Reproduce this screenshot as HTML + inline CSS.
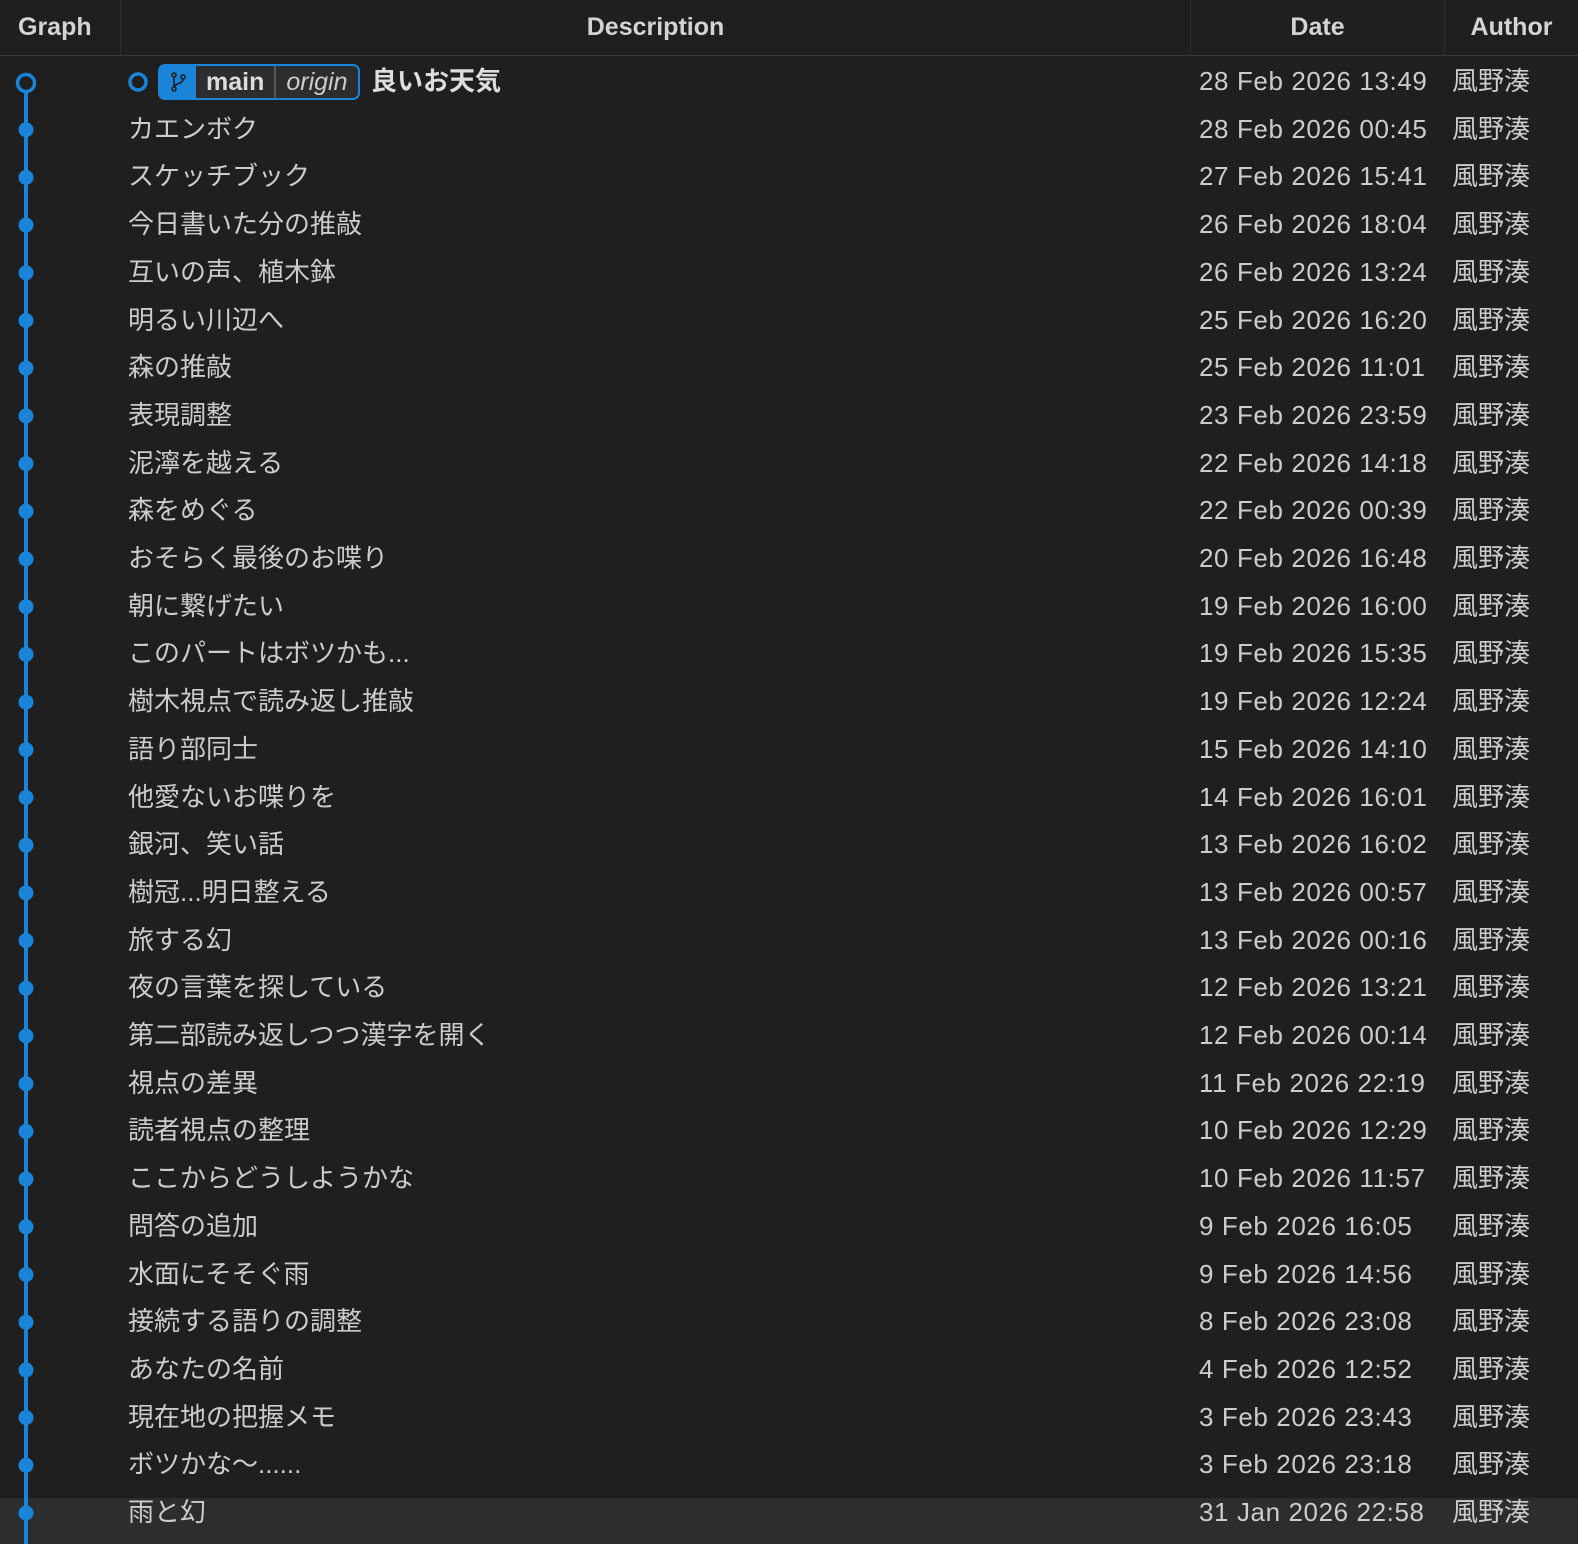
<!DOCTYPE html>
<html style="margin:0;width:1578px;height:1544px;overflow:hidden"><head><meta charset="utf-8"><style>
body{margin:0;width:1578px;height:1544px;background:#1f1f1f;overflow:hidden;font-family:"Liberation Sans","Noto Sans CJK JP",sans-serif;color:#cccccc}
#wrap{position:relative;width:1578px;height:1544px;overflow:hidden}
.hdr{position:absolute;top:0;left:0;width:1578px;height:56px;border-bottom:1px solid #3a3a3a;font-weight:bold;font-size:25px;color:#d4d4d4;box-sizing:border-box}
.hdr div{position:absolute;top:0;height:56px;line-height:54px;border-right:1px solid #2f2f2f;text-align:center;box-sizing:border-box}
.row{position:absolute;left:0;width:1578px;height:47.7px;font-size:26px;line-height:47.7px}
.row .d{position:absolute;left:128px;white-space:nowrap}
.row .t{position:absolute;left:1199px;letter-spacing:0.6px;white-space:nowrap}
.row .a{position:absolute;left:1452px;white-space:nowrap}
.badge{position:absolute;left:158px;top:6px;height:36px;border:2px solid #1a84d8;border-radius:7px;background:#2b2d2e;display:flex;box-sizing:border-box;line-height:32px;font-size:25px}
.badge .ic{width:36px;background:#1a84d8;display:flex;align-items:center;justify-content:center}
.badge .m{padding:0 10px;font-weight:bold;color:#ddd;border-right:2px solid #555}
.badge .o{padding:0 10px;font-style:italic;color:#ccc}
</style></head><body><div id="wrap">
<div class="hdr">
<div style="left:0;width:121px;text-align:left;padding-left:18px">Graph</div>
<div style="left:121px;width:1070px">Description</div>
<div style="left:1191px;width:254px">Date</div>
<div style="left:1445px;width:133px;border:none">Author</div>
</div>
<div style="position:absolute;left:0;top:1498px;width:1578px;height:46px;background:#2b2d2e"></div>
<svg style="position:absolute;left:0;top:0" width="60" height="1544">
<line x1="26" y1="93" x2="26" y2="1544" stroke="#1a84d8" stroke-width="4"/>
<circle cx="26" cy="83" r="8.5" fill="#1f1f1f" stroke="#1a84d8" stroke-width="3.5"/>
<g fill="#1a84d8" id="dots"></g>
</svg>
<svg style="position:absolute;left:126px;top:70px" width="24" height="24"><circle cx="12" cy="12" r="8" fill="none" stroke="#1a84d8" stroke-width="3.5"/></svg>
<div id="rows"></div>
</div>
<script>
const data=[["良いお天気","28 Feb 2026 13:49"],["カエンボク","28 Feb 2026 00:45"],["スケッチブック","27 Feb 2026 15:41"],["今日書いた分の推敲","26 Feb 2026 18:04"],["互いの声、植木鉢","26 Feb 2026 13:24"],["明るい川辺へ","25 Feb 2026 16:20"],["森の推敲","25 Feb 2026 11:01"],["表現調整","23 Feb 2026 23:59"],["泥濘を越える","22 Feb 2026 14:18"],["森をめぐる","22 Feb 2026 00:39"],["おそらく最後のお喋り","20 Feb 2026 16:48"],["朝に繋げたい","19 Feb 2026 16:00"],["このパートはボツかも...","19 Feb 2026 15:35"],["樹木視点で読み返し推敲","19 Feb 2026 12:24"],["語り部同士","15 Feb 2026 14:10"],["他愛ないお喋りを","14 Feb 2026 16:01"],["銀河、笑い話","13 Feb 2026 16:02"],["樹冠...明日整える","13 Feb 2026 00:57"],["旅する幻","13 Feb 2026 00:16"],["夜の言葉を探している","12 Feb 2026 13:21"],["第二部読み返しつつ漢字を開く","12 Feb 2026 00:14"],["視点の差異","11 Feb 2026 22:19"],["読者視点の整理","10 Feb 2026 12:29"],["ここからどうしようかな","10 Feb 2026 11:57"],["問答の追加","9 Feb 2026 16:05"],["水面にそそぐ雨","9 Feb 2026 14:56"],["接続する語りの調整","8 Feb 2026 23:08"],["あなたの名前","4 Feb 2026 12:52"],["現在地の把握メモ","3 Feb 2026 23:43"],["ボツかな〜......","3 Feb 2026 23:18"],["雨と幻","31 Jan 2026 22:58"]];
let h="",dots="";
data.forEach((r,i)=>{const top=58+i*47.7;const cy=top+24;
if(i==0){h+=`<div class="row" style="top:${top}px"><div class="badge"><div class="ic"><svg width="20" height="22" viewBox="0 0 20 22"><g fill="none" stroke="#1f1f1f" stroke-width="1.6"><circle cx="6" cy="4" r="2"/><circle cx="6" cy="18" r="2"/><circle cx="15" cy="6" r="2"/><line x1="6" y1="6" x2="6" y2="16"/><path d="M15 8 C15 13 7 12 6.5 16"/></g></svg></div><div class="m">main</div><div class="o">origin</div></div><div class="d" style="left:371px;font-weight:bold;color:#ddd">${r[0]}</div><div class="t">${r[1]}</div><div class="a">風野湊</div></div>`;}
else{h+=`<div class="row" style="top:${top}px"><div class="d">${r[0]}</div><div class="t">${r[1]}</div><div class="a">風野湊</div></div>`;dots+=`<circle cx="26" cy="${cy}" r="7.5"/>`;}
});
document.getElementById("rows").innerHTML=h;document.getElementById("dots").innerHTML=dots;
</script>
</body></html>
